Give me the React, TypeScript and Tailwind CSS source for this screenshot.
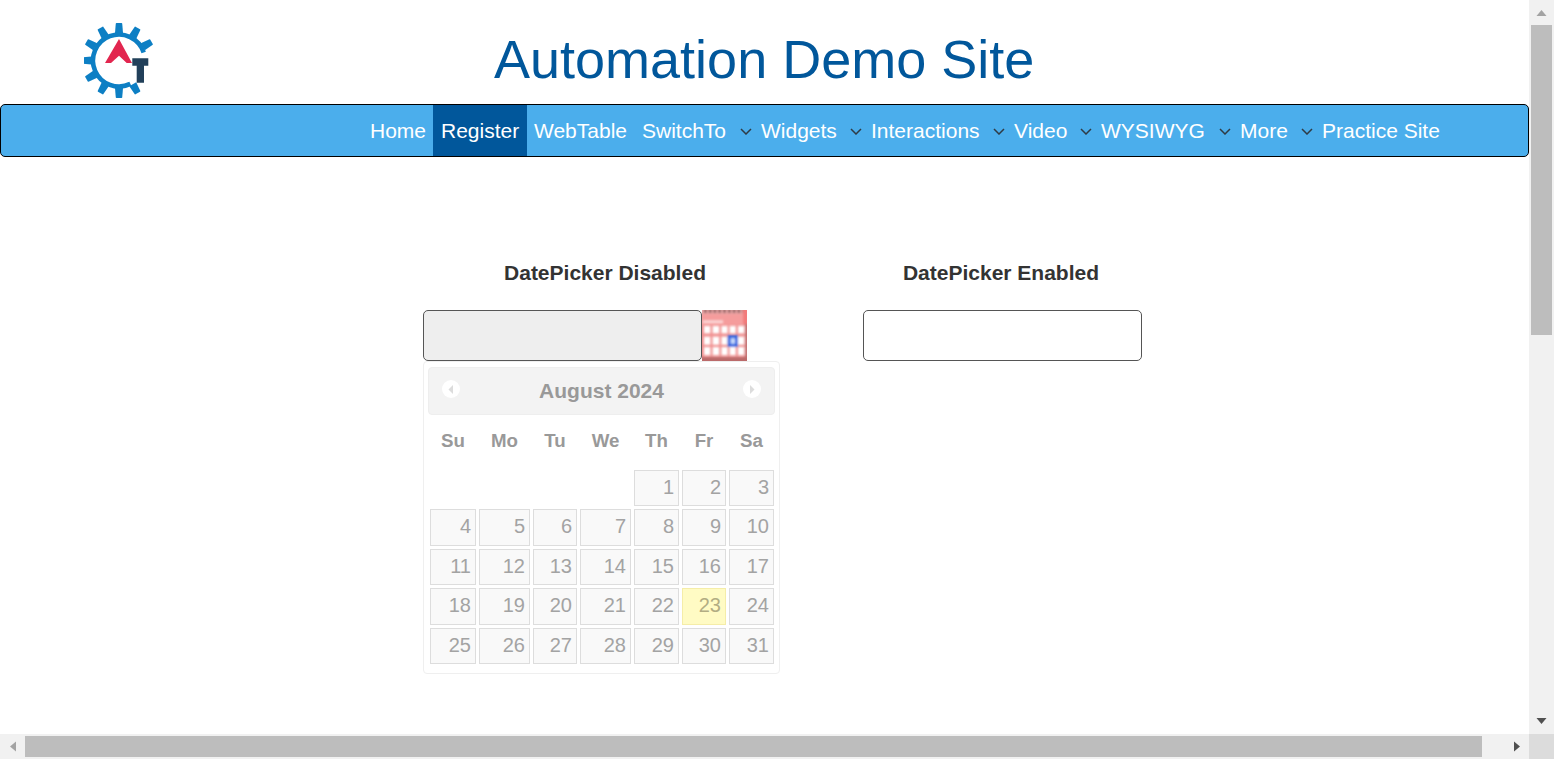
const navItems = [
  { label: "Home", width: "w-[71px]", pad: "pl-2" },
  { label: "Register", width: "w-[94px]", pad: "pl-2", active: true },
  { label: "WebTable", width: "w-[107px]", pad: "pl-[7px]" },
  { label: "SwitchTo", width: "w-[119px]", pad: "pl-2", caret: true },
  { label: "Widgets", width: "w-[110px]", pad: "pl-2", caret: true },
  { label: "Interactions", width: "w-[143px]", pad: "pl-2", caret: true },
  { label: "Video", width: "w-[87px]", pad: "pl-2", caret: true },
  { label: "WYSIWYG", width: "w-[139px]", pad: "pl-2", caret: true },
  { label: "More", width: "w-[82px]", pad: "pl-2", caret: true },
  { label: "Practice Site", width: "w-[134px]", pad: "pl-2" },
];

const weeks: (number | null)[][] = [
  [null, null, null, null, 1, 2, 3],
  [4, 5, 6, 7, 8, 9, 10],
  [11, 12, 13, 14, 15, 16, 17],
  [18, 19, 20, 21, 22, 23, 24],
  [25, 26, 27, 28, 29, 30, 31],
];
const days = ["Su", "Mo", "Tu", "We", "Th", "Fr", "Sa"];

function Logo() {
  const teeth = [0, 30, 60, 150, 180, 210, 240, 270, 300, 330];
  return (
    <svg width="72" height="78" viewBox="0 0 72 78" className="block shrink-0">
      <g filter="url(#logo-soft)">
        {teeth.map((a) => (
          <path key={a} d="M31 12 L31.8 2.4 Q31.9 2 32.4 2 H37.6 Q38.1 2 38.2 2.4 L39 12 Z" fill="#0b7fc4" transform={`rotate(${a} 35 39.5)`} />
        ))}
        <path d="M59.7 31.5 A26 26 0 1 0 46.4 62.9" fill="none" stroke="#0b7fc4" strokeWidth="4.6" />
        <path d="M35 18 L48 42 H42.7 L35 34.7 L27 42 H21 Z" fill="#e2264f" />
        <path d="M48.3 37.3 H64.3 V44.7 H60 V61.7 H52.7 V44.7 H48.3 Z" fill="#24405a" />
      </g>
      <defs>
        <filter id="logo-soft" x="-5%" y="-5%" width="110%" height="110%">
          <feGaussianBlur stdDeviation="0.3" />
        </filter>
      </defs>
    </svg>
  );
}

function CalendarIcon() {
  const xs: [number, number][] = [[2, 6.4], [10.6, 6.6], [19.4, 6.2], [27.6, 6.2], [36, 6.2]];
  const ys: [number, number][] = [[16, 7.4], [26.6, 8.2], [37, 8.2]];
  return (
    <svg width="45" height="51" viewBox="0 0 45 51" className="block shrink-0">
      <defs>
        <filter id="soft" x="-5%" y="-5%" width="110%" height="110%">
          <feGaussianBlur stdDeviation="0.85" />
        </filter>
      </defs>
      <rect width="45" height="51" fill="#f09090" />
      <g filter="url(#soft)">
        <rect x="-2" y="-2" width="49" height="6" fill="#eaa6a6" />
        {Array.from({ length: 9 }, (_, i) => (
          <rect key={i} x={2 + i * 4.8} y="-1" width="2.6" height="4" fill="#8f6060" />
        ))}
        <rect x="41" y="-2" width="6" height="16" fill="#f27a7a" />
        <rect x="-2" y="4" width="43" height="11" fill="#f59c9c" />
        <rect x="1" y="10.4" width="20" height="2.8" fill="#fcd8d8" />
        {ys.flatMap(([y, h]) =>
          xs.map(([x, w]) => <rect key={`${x}-${y}`} x={x} y={y} width={w} height={h} fill="#fff" />)
        )}
        <rect x="25.6" y="25" width="10.4" height="12" fill="#2f66e0" />
        <rect x="28.6" y="28.2" width="4.4" height="5.6" fill="#c4d8fa" />
        <rect x="43" y="14" width="4" height="39" fill="#c27272" />
        <rect x="-2" y="47" width="49" height="6" fill="#bb6a6a" />
      </g>
    </svg>
  );
}

function Triangle({ dir, className }: { dir: "up" | "down" | "left" | "right"; className: string }) {
  const points = { up: "0,6 5,0 10,6", down: "0,0 10,0 5,6", left: "6,0 6,10 0,5", right: "0,0 0,10 6,5" }[dir];
  const vertical = dir === "up" || dir === "down";
  return (
    <svg width={vertical ? 11 : 6} height={vertical ? 6 : 11} viewBox={vertical ? "0 0 10 6" : "0 0 6 10"} className={className}>
      <polygon points={points} fill="currentColor" />
    </svg>
  );
}

function NavArrow({ right }: { right?: boolean }) {
  return (
    <span className="flex h-[18px] w-[18px] items-center justify-center rounded-full bg-white">
      <svg width="6" height="9" viewBox="0 0 6 9">
        <polygon points={right ? "1,0 5.5,4.5 1,9" : "5,0 0.5,4.5 5,9"} fill="#dcdcdc" />
      </svg>
    </span>
  );
}

export default function App() {
  return (
    <div className="flex h-[759px] w-[1554px] flex-col overflow-hidden bg-white font-['Liberation_Sans',Arial,sans-serif]">
      <div className="flex h-[734px] min-h-0">
        <main className="w-[1529px] shrink-0">
          <header className="flex h-[104px] items-start pl-[84px] pt-[21px]">
            <Logo />
            <h1 className="ml-[338px] mt-[6px] text-[54px] font-normal leading-[64px] whitespace-nowrap text-[#01579b]">Automation Demo Site</h1>
          </header>

          <nav className="flex h-[53px] items-stretch rounded-[5px] border border-black bg-[#4baeec] pl-[361px]">
            {navItems.map((item) => (
              <div
                key={item.label}
                className={`flex shrink-0 items-center whitespace-nowrap text-[21px] text-white ${item.pad} ${item.width} ${item.active ? "bg-[#01579b]" : ""}`}
              >
                <span>{item.label}</span>
                {item.caret && (
                  <svg width="12" height="7" viewBox="0 0 12 7" className="ml-auto mr-[1px] mt-[1px] text-[#2f3b45]">
                    <path d="M1 1 L6 6 L11 1" fill="none" stroke="currentColor" strokeWidth="1.5" />
                  </svg>
                )}
              </div>
            ))}
          </nav>

          <section className="flex pl-[423px] pt-[105px]">
            <div className="w-[440px]">
              <h2 className="w-[364px] text-center text-[21px] font-bold leading-[22px] text-[#333]">DatePicker Disabled</h2>
              <div className="mt-[26px] flex">
                <div className="h-[51px] w-[279px] rounded-[5px] border border-[#555] bg-[#eeeeee]" />
                <CalendarIcon />
              </div>
              <div className="h-[313px] w-[357px] rounded-[4px] border border-[#efefef] bg-white p-[4px]">
                <div className="relative mt-[1px] flex h-[48px] items-center justify-center rounded-[4px] border border-[#eeeeee] bg-[#f3f3f3] text-[21px] font-bold text-[#999]">
                  <span className="absolute left-[13px] top-[12px]"><NavArrow /></span>
                  August 2024
                  <span className="absolute right-[13px] top-[12px]"><NavArrow right /></span>
                </div>
                <div className="mt-[2px] grid grid-cols-[46px_51px_44px_51px_45px_44px_45px] gap-x-[3px] pl-[2px]">
                  {days.map((d) => (
                    <div key={d} className="flex h-[49px] items-center justify-center text-[18.7px] font-bold text-[#999]">{d}</div>
                  ))}
                </div>
                <div className="mt-[3.5px] grid grid-cols-[46px_51px_44px_51px_45px_44px_45px] auto-rows-[36.5px] gap-x-[3px] gap-y-[3px] pl-[2px]">
                  {weeks.flat().map((d, i) =>
                    d === null ? (
                      <div key={i} />
                    ) : (
                      <div
                        key={i}
                        className={`border pr-[4px] text-right text-[20px] leading-[33px] ${d === 23 ? "border-[#f5eda8] bg-[#fffbc4] text-[#b2ad83]" : "border-[#dddddd] bg-[#f9f9f9] text-[#a3a3a3]"}`}
                      >
                        {d}
                      </div>
                    )
                  )}
                </div>
              </div>
            </div>
            <div>
              <h2 className="w-[276px] text-center text-[21px] font-bold leading-[22px] text-[#333]">DatePicker Enabled</h2>
              <div className="mt-[26px] h-[51px] w-[279px] rounded-[5px] border border-[#555] bg-white" />
            </div>
          </section>
        </main>

        <div className="flex w-[25px] shrink-0 flex-col items-center bg-[#f1f1f1]">
          <div className="flex h-[25px] items-center justify-center text-[#a3a3a3]"><Triangle dir="up" className="block" /></div>
          <div className="h-[310px] w-[21px] bg-[#bdbdbd]" />
          <div className="flex-1" />
          <div className="flex h-[25px] items-center justify-center pb-[1px] text-[#505050]"><Triangle dir="down" className="block" /></div>
        </div>
      </div>

      <div className="flex h-[25px] shrink-0 bg-[#f1f1f1]">
        <div className="flex w-[25px] items-center justify-center text-[#a3a3a3]"><Triangle dir="left" className="block" /></div>
        <div className="my-[2px] w-[1457px] bg-[#bdbdbd]" />
        <div className="flex w-[47px] items-center justify-end text-[#505050]"><Triangle dir="right" className="mr-[9px] block" /></div>
        <div className="w-[25px] bg-[#dcdcdc]" />
      </div>
    </div>
  );
}
